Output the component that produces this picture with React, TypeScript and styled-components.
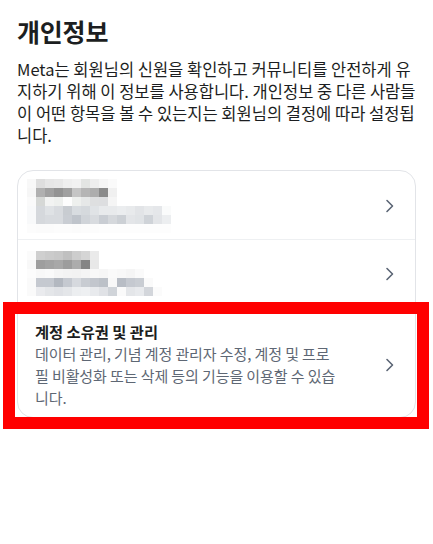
import React from 'react';
import styled, { createGlobalStyle } from 'styled-components';

const GlobalStyle = createGlobalStyle`
  html, body {
    margin: 0;
    padding: 0;
    background: #ffffff;
  }
  body {
    font-family: "Noto Sans CJK KR", "Noto Sans", sans-serif;
    color: #1c1e21;
  }
`;

// blurred (pixelated) rows from the screenshot, 9px cells
const CELL = 9;

const firstMosaic: string[][] = [
  ['f8f8f8', 'dedede', 'e6e6e6', 'e8e8e8', 'efefef', 'f2f2f2', 'e3e5e3', 'eeeeee', 'f5f5f5', 'fafafa'],
  ['f6f6f6', 'b0b0b0', 'a0a0a0', '939393', 'a0a0a0', 'c5c5c5', 'b5b5b5', 'adadad', '8a8a8a', 'f0f0f0'],
  ['fafafa', 'd6d8d6', 'f2f3f2', 'eef0ee', 'fdfdfd', 'eef0ee', 'e6e8e8', 'dedfe0', 'dddee0', 'f5f5f5'],
  ['f8f9fa', 'd5d8dc', 'dfe2e5', 'd8dbdf', 'c8ccd1', 'd8dce0', 'd5d9dd', 'e0e3e6', 'e8eaec', 'e8eaec', 'ebedef', 'e8eaec', 'e2e4e7', 'e8eaec', 'e5e7ea', 'fafbfb'],
  ['f8f9fa', 'd5d8dc', 'd8dbdf', 'd8dbdf', 'c9cdd3', 'bfc4cb', 'd0d4d9', 'd8dbdf', 'c9cdd3', 'd5d8dc', 'ccd0d5', 'e3e5e8', 'e0e3e6', 'cfd3d8', 'e3e5e8', 'eceef0'],
  ['fcfcfc', 'fbfbfb', 'fbfbfb', 'fcfcfc', 'fcfcfc', 'fbfbfb', 'fcfcfc', 'fcfcfc', 'fdfdfd', 'fdfdfd', 'fdfdfd', 'fdfdfd', 'fdfdfd', 'fdfdfd', 'fdfdfd', 'fdfdfd'],
];

const secondMosaic: string[][] = [
  ['fbfbfb', 'cfcfcf', 'cbcbcb', 'c8c8c8', 'c0c0c0', 'cdcdcd', 'd5d5d5', 'eaeaea'],
  ['f8f8f8', '9e9e9e', 'a3a3a3', 'a8a8a8', '9d9d9d', 'acacac', '858585', 'e8e8e8'],
  ['fcfcfc', 'f8f8f8', 'fafafa', 'f5f5f5', 'f3f3f3', 'f2f2f2', 'f5f5f5', 'f8f8f8', 'f6f6f6', 'fafafa', 'f8f8f8', 'f5f5f5', 'fafafa'],
  ['fafafa', 'c5c9d0', 'c5c9d0', 'b3b8c0', 'c5c9d0', 'd6d9de', 'c8ccd2', 'c2c6cd', 'bcc1c8', 'f8f8f8', 'b8bdc5', 'c5c9d0', 'c9cdd3', 'fafafa'],
  ['fafafa', 'eaebee', 'e4e6e9', 'e0e2e6', 'e4e6e9', 'eceef0', 'eef0f2', 'e8eaed', 'e0e2e6', 'd0d4d9', 'fafafa', 'e4e6e9', 'e8eaed', 'd3d6db', 'fbfbfb'],
];

const Mosaic = ({ cells }: { cells: string[][] }) => {
  const cols = Math.max(...cells.map((r) => r.length));
  return (
    <svg width={cols * CELL} height={cells.length * CELL} style={{ display: 'block' }}>
      {cells.map((row, y) =>
        row.map((c, x) => (
          <rect key={`${x}-${y}`} x={x * CELL} y={y * CELL} width={CELL} height={CELL} fill={`#${c}`} />
        ))
      )}
    </svg>
  );
};

const Chevron = () => (
  <svg width='10' height='14' viewBox='0 0 10 14' fill='none'>
    <path d='M2 1.5 L7.5 7 L2 12.5' stroke='#5b6575' strokeWidth='1.6' strokeLinecap='round' strokeLinejoin='round' />
  </svg>
);

export default function App() {
  return (
    <>
      <GlobalStyle />
      <Page>
        <Title>개인정보</Title>
        <Intro>
          Meta는 회원님의 신원을 확인하고 커뮤니티를 안전하게 유
          <br />
          지하기 위해 이 정보를 사용합니다. 개인정보 중 다른 사람들
          <br />
          이 어떤 항목을 볼 수 있는지는 회원님의 결정에 따라 설정됩
          <br />
          니다.
        </Intro>
        <Card>
          <Row $pad='8px 20px 6px 9px'>
            <Mosaic cells={firstMosaic} />
            <Chevron />
          </Row>
          <Row $pad='11px 20px 11px 9px'>
            <Mosaic cells={secondMosaic} />
            <Chevron />
          </Row>
          <Row $pad='13px 20px 8px 17px'>
            <RowText>
              <RowTitle>계정 소유권 및 관리</RowTitle>
              <RowDesc>
                데이터 관리, 기념 계정 관리자 수정, 계정 및 프로
                <br />
                필 비활성화 또는 삭제 등의 기능을 이용할 수 있습
                <br />
                니다.
              </RowDesc>
            </RowText>
            <Chevron />
            <Highlight />
          </Row>
        </Card>
      </Page>
    </>
  );
}

const Page = styled.div`
  padding: 15px 17px 40px;
`;

const Title = styled.h1`
  margin: 0;
  font-size: 25px;
  line-height: 32px;
  font-weight: 700;
  letter-spacing: -0.2px;
  color: #1c1e21;
`;

const Intro = styled.p`
  margin: 11px 0 0;
  font-size: 16.5px;
  line-height: 22px;
  white-space: nowrap;
  color: #1c1e21;
`;

const Card = styled.div`
  margin-top: 24px;
  border: 1px solid #e2e4e8;
  border-radius: 16px;
  background: #ffffff;
`;

const Row = styled.div<{ $pad: string }>`
  position: relative;
  display: flex;
  align-items: center;
  justify-content: space-between;
  padding: ${(p) => p.$pad};

  & + & {
    border-top: 1px solid #eef0f2;
  }
`;

const RowText = styled.div`
  display: flex;
  flex-direction: column;
`;

const RowTitle = styled.div`
  font-size: 15.3px;
  line-height: 21px;
  font-weight: 700;
  color: #1c1e21;
`;

const RowDesc = styled.div`
  margin-top: 1px;
  font-size: 15px;
  line-height: 22px;
  letter-spacing: -0.1px;
  white-space: nowrap;
  color: #5e6774;
`;

// red annotation frame drawn over the last row
const Highlight = styled.div`
  position: absolute;
  left: -15px;
  right: -14px;
  top: -6px;
  bottom: -12px;
  border: 12px solid #ff0000;
  pointer-events: none;
`;
